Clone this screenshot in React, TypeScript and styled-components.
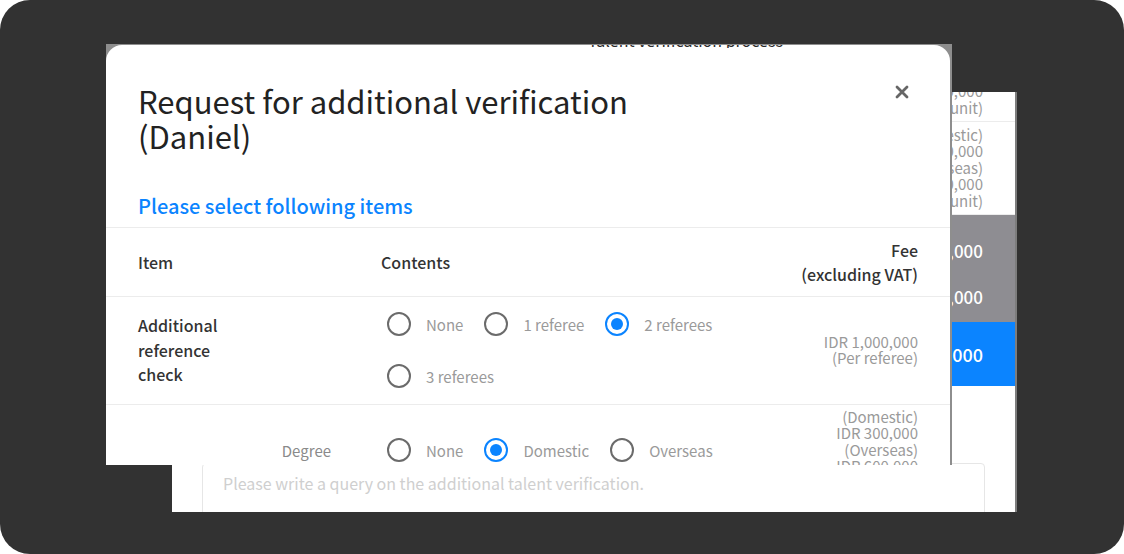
import React from "react";
import styled, { createGlobalStyle } from "styled-components";

const FONT = `"Noto Sans CJK KR", "Noto Sans", sans-serif`;
const BLUE = "#0b84ff";

const GlobalStyle = createGlobalStyle`
  html, body { margin: 0; padding: 0; background: #ffffff; }
  body { font-family: ${FONT}; }
  * { box-sizing: border-box; }
`;

const Frame = styled.div`
  position: relative;
  width: 1124px;
  height: 554px;
  background: #323232;
  border-radius: 30px;
  overflow: hidden;
  padding: 92px 107px 0 172px;
`;

/* ---------- background page (behind the modal) ---------- */
const BackPanel = styled.section`
  width: 845px;
  height: 420px;
  background: #fff;
  border-right: 2px solid #7d7d7d;
  overflow: hidden;
  display: flex;
  flex-direction: column;
`;

const BackScroller = styled.div`
  margin-top: -14px;
  display: flex;
  flex-direction: column;
`;

const BackRow = styled.div<{ $h: number }>`
  height: ${(p) => p.$h}px;
  flex: none;
  display: flex;
  align-items: center;
  justify-content: space-between;
  padding: 0 32px;
  border-bottom: 1px solid #ececec;
  font-size: 16px;
  color: #333;
`;

const Fee = styled.div`
  text-align: right;
  font-size: 15px;
  line-height: 16.4px;
  color: #9a9a9a;
  white-space: nowrap;
`;

const Band = styled.div<{ $tone: "gray" | "blue"; $h: number }>`
  height: ${(p) => p.$h}px;
  flex: none;
  background: ${(p) => (p.$tone === "gray" ? "#8e8d92" : BLUE)};
  padding: ${(p) => (p.$tone === "gray" ? "12px 32px 3px" : "0 32px")};
  display: flex;
  flex-direction: column;
  justify-content: center;
  color: #fff;
`;

const BandLine = styled.div`
  height: 46px;
  display: flex;
  align-items: center;
  justify-content: space-between;
  font-size: 17px;
  font-weight: 500;
`;

const BlueLine = styled(BandLine)`
  font-size: 18px;
`;

const Spacer = styled.div`
  height: 77px;
  flex: none;
  padding: 0 30px;
  display: flex;
  align-items: center;
  font-size: 16px;
  color: #333;
`;

const QueryWrap = styled.div`
  padding: 0 30px;
`;

const Query = styled.textarea`
  display: block;
  width: 100%;
  height: 120px;
  resize: none;
  border: 1px solid #e6e6e6;
  border-radius: 4px;
  padding: 8px 20px;
  font-family: ${FONT};
  font-size: 16px;
  line-height: 22px;
  color: #333;
  outline: none;
  &::placeholder {
    color: #cfcfcf;
  }
`;

/* ---------- modal ---------- */
const ModalLayer = styled.div`
  position: absolute;
  left: 106px;
  top: 44px;
  width: 846px;
  height: 421px;
  background: #8e8e8e;
  padding: 1px 2px 0 0;
`;

const PeekStrip = styled.div`
  position: absolute;
  left: 482px;
  top: 1px;
  width: 210px;
  height: 3px;
  overflow: hidden;
  z-index: 2;
`;

const PeekText = styled.div`
  margin-top: -13px;
  font-size: 16px;
  line-height: 17px;
  color: #2a2a2a;
  white-space: nowrap;
`;

const Modal = styled.div`
  height: 100%;
  background: #fff;
  border-radius: 16px 16px 0 0;
  overflow: hidden;
`;

const Head = styled.header`
  padding: 38px 32px 7px;
`;

const TitleRow = styled.div`
  display: flex;
  justify-content: space-between;
  align-items: flex-start;
`;

const Title = styled.h2`
  margin: 0;
  max-width: 540px;
  font-size: 31px;
  line-height: 35px;
  font-weight: 400;
  color: #222;
`;

const Close = styled.button`
  width: 14px;
  height: 14px;
  margin: 2px 9px 0 0;
  padding: 0;
  border: 0;
  background: none;
  display: flex;
  cursor: pointer;
`;

const Subtitle = styled.p`
  margin: 39px 0 0;
  font-size: 20px;
  line-height: 28px;
  font-weight: 500;
  color: ${BLUE};
`;

const Table = styled.div`
  border-top: 1px solid #ececec;
`;

const GridRow = styled.div<{ $pad: string }>`
  display: grid;
  grid-template-columns: 243px 1fr 150px;
  align-items: center;
  padding: ${(p) => p.$pad};
  border-bottom: 1px solid #ececec;
`;

const HeadCell = styled.div<{ $right?: boolean }>`
  font-size: 16px;
  line-height: 24px;
  font-weight: 500;
  color: #333;
  text-align: ${(p) => (p.$right ? "right" : "left")};
`;

const ItemLabel = styled.div`
  max-width: 100px;
  font-size: 16px;
  line-height: 24.5px;
  font-weight: 500;
  color: #333;
`;

const Options = styled.div`
  display: flex;
  flex-wrap: wrap;
  row-gap: 28px;
  column-gap: 21px;
  padding-left: 6px;
`;

const Option = styled.label`
  display: flex;
  align-items: center;
  gap: 15px;
  height: 24px;
  font-size: 15px;
  color: #9a9a9a;
  white-space: nowrap;
  cursor: pointer;
`;

const Radio = styled.input.attrs({ type: "radio" })`
  appearance: none;
  margin: 0;
  width: 24px;
  height: 24px;
  border-radius: 50%;
  border: 2px solid #6b6b6b;
  background: #fff;
  flex: none;
  display: grid;
  place-items: center;
  &::after {
    content: "";
    width: 12px;
    height: 12px;
    border-radius: 50%;
    background: transparent;
  }
  &:checked {
    border: 2.5px solid ${BLUE};
  }
  &:checked::after {
    background: ${BLUE};
  }
`;

const GroupRow = styled.div`
  display: flex;
  padding: 0 32px;
  border-bottom: 1px solid #ececec;
`;

const GroupLabel = styled(ItemLabel)`
  width: 110px;
  max-width: none;
  flex: none;
  padding-right: 10px;
  display: flex;
  align-items: center;
`;

const SubRows = styled.div`
  flex: 1;
  display: flex;
  flex-direction: column;
`;

const SubRow = styled.div`
  display: grid;
  grid-template-columns: 133px 1fr 150px;
  align-items: center;
  padding: 4px 0 14px;
`;

const SubLabel = styled.div`
  justify-self: end;
  padding-right: 50px;
  font-size: 15px;
  color: #8a8a8a;
`;

type Opt = { label: string; checked?: boolean };

function RadioGroup({ name, options }: { name: string; options: Opt[] }) {
  return (
    <Options>
      {options.map((o) => (
        <Option key={o.label}>
          <Radio name={name} defaultChecked={o.checked} />
          {o.label}
        </Option>
      ))}
    </Options>
  );
}

function FeeLines({ lines }: { lines: string[] }) {
  return (
    <Fee>
      {lines.map((l) => (
        <div key={l}>{l}</div>
      ))}
    </Fee>
  );
}

export default function App() {
  return (
    <>
      <GlobalStyle />
      <Frame>
        <BackPanel>
          <BackScroller>
            <BackRow $h={44}>
              <span>Additional reference check</span>
              <FeeLines lines={["IDR 1,000,000", "(Per unit)"]} />
            </BackRow>
            <BackRow $h={93}>
              <span>Degree</span>
              <FeeLines
                lines={["(Domestic)", "IDR 300,000", "(Overseas)", "IDR 600,000", "(Per unit)"]}
              />
            </BackRow>
            <Band $tone="gray" $h={107}>
              <BandLine>
                <span>Subtotal</span>
                <span>IDR 2,300,000</span>
              </BandLine>
              <BandLine>
                <span>VAT</span>
                <span>IDR 230,000</span>
              </BandLine>
            </Band>
            <Band $tone="blue" $h={64}>
              <BlueLine>
                <span>Total</span>
                <span>IDR 2,530,000</span>
              </BlueLine>
            </Band>
            <Spacer>Inquiry</Spacer>
            <QueryWrap>
              <Query placeholder="Please write a query on the additional talent verification." />
            </QueryWrap>
          </BackScroller>
        </BackPanel>

        <ModalLayer>
          <PeekStrip>
            <PeekText>Talent verification process</PeekText>
          </PeekStrip>
          <Modal>
            <Head>
              <TitleRow>
                <Title>Request for additional verification (Daniel)</Title>
                <Close aria-label="Close">
                  <svg width="14" height="14" viewBox="0 0 14 14">
                    <path
                      d="M2 2 L12 12 M12 2 L2 12"
                      stroke="#666666"
                      strokeWidth="2.8"
                      strokeLinecap="round"
                    />
                  </svg>
                </Close>
              </TitleRow>
              <Subtitle>Please select following items</Subtitle>
            </Head>
            <Table>
              <GridRow $pad="10px 32px">
                <HeadCell>Item</HeadCell>
                <HeadCell>Contents</HeadCell>
                <HeadCell $right>
                  Fee
                  <br />
                  (excluding VAT)
                </HeadCell>
              </GridRow>
              <GridRow $pad="15px 32px 16px">
                <ItemLabel>Additional reference check</ItemLabel>
                <RadioGroup
                  name="ref"
                  options={[
                    { label: "None" },
                    { label: "1 referee" },
                    { label: "2 referees", checked: true },
                    { label: "3 referees" },
                  ]}
                />
                <FeeLines lines={["IDR 1,000,000", "(Per referee)"]} />
              </GridRow>
              <GroupRow>
                <GroupLabel>Education / career check</GroupLabel>
                <SubRows>
                  <SubRow>
                    <SubLabel>Degree</SubLabel>
                    <RadioGroup
                      name="degree"
                      options={[
                        { label: "None" },
                        { label: "Domestic", checked: true },
                        { label: "Overseas" },
                      ]}
                    />
                    <FeeLines
                      lines={["(Domestic)", "IDR 300,000", "(Overseas)", "IDR 600,000", "(Per unit)"]}
                    />
                  </SubRow>
                  <SubRow>
                    <SubLabel>Career</SubLabel>
                    <RadioGroup
                      name="career"
                      options={[{ label: "None" }, { label: "1 company" }, { label: "2 companies" }]}
                    />
                    <FeeLines lines={["IDR 500,000", "(Per company)"]} />
                  </SubRow>
                  <SubRow>
                    <SubLabel>Certificate</SubLabel>
                    <RadioGroup
                      name="cert"
                      options={[{ label: "None" }, { label: "1 certificate" }, { label: "2 certificates" }]}
                    />
                    <FeeLines lines={["IDR 200,000", "(Per certificate)"]} />
                  </SubRow>
                </SubRows>
              </GroupRow>
            </Table>
          </Modal>
        </ModalLayer>
      </Frame>
    </>
  );
}
